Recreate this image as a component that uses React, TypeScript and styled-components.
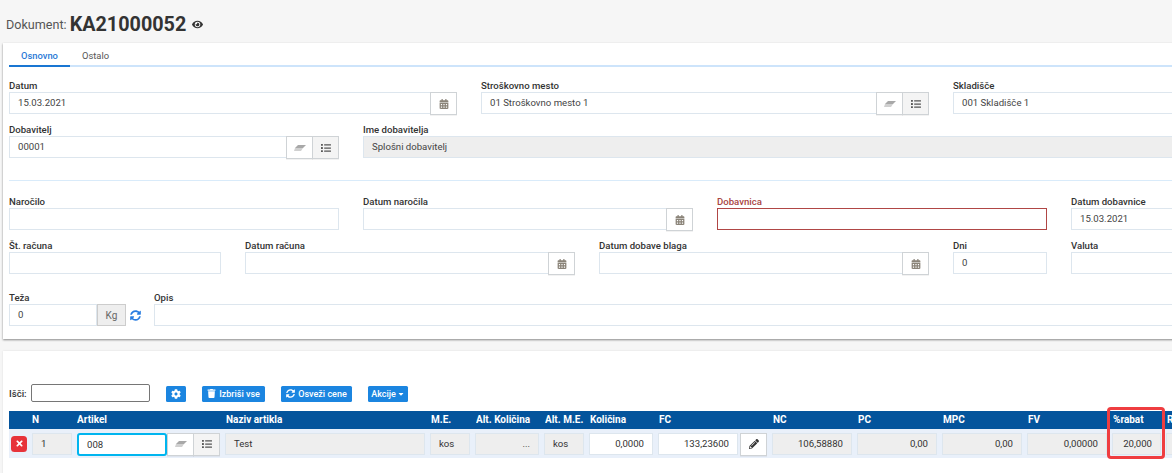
import React from "react";
import styled, { createGlobalStyle } from "styled-components";
import { FaCalendarAlt, FaCog, FaEye, FaList, FaPencilAlt, FaSyncAlt, FaTimes, FaTrash, FaCaretDown } from "react-icons/fa";

const Global = createGlobalStyle`
  html, body { margin: 0; padding: 0; background: #f6f6f6; }
  * { box-sizing: border-box; }
  body { font-family: Roboto, "Liberation Sans", sans-serif; font-size: 10px; color: #333; }
`;
const Page = styled.div`width: 1172px; height: 473px; overflow: hidden; position: relative; padding-top: 9px;`;
const Header = styled.div`height: 30px; margin-bottom: 4px; padding-left: 6px; display: flex; align-items: center; gap: 3px; font-size: 12.6px; color: #555;`;
const DocNo = styled.span`font-size: 19.8px; font-weight: 700; color: #333; margin-right: 3px;`;
const Panel = styled.section`margin-left: 3px; width: 1200px; background: #fff; box-shadow: 0 1px 2px rgba(0,0,0,.45);`;
const TopPanel = styled(Panel)`height: 296px; padding: 0 0 0 6px;`;
const BottomPanel = styled(Panel)`height: 130px; margin-top: 12px; padding: 33px 0 0 6px; box-shadow: 0 0 2px rgba(0,0,0,.1);`;
const Tabs = styled.div`display: flex; height: 24px; width: 1194px; border-bottom: 2px solid #cde4fb; margin-bottom: 13px;`;
const Tab = styled.div<{ $active?: boolean }>`
  height: 24px; padding: 7px 12px 0; font-size: 9.4px; line-height: 12px; font-weight: ${p => p.$active ? 500 : 400};
  color: ${p => p.$active ? "#2a78d6" : "#555"}; border-bottom: 2px solid ${p => p.$active ? "#1976d2" : "transparent"};
`;
const Row = styled.div<{ $h?: number }>`display: flex; gap: 24px; height: ${p => p.$h ?? 44}px;`;
const Field = styled.div<{ $w: number; $ml?: number }>`width: ${p => p.$w}px; flex: none; margin-left: ${p => p.$ml ?? 0}px;`;
const Label = styled.div<{ $error?: boolean }>`
  font-size: 9.6px; line-height: 11px; height: 12px; font-weight: 500; color: ${p => p.$error ? "#a94442" : "#333"}; white-space: nowrap;
`;
const Group = styled.div`display: flex; height: 22px;`;
const Input = styled.div<{ $disabled?: boolean; $error?: boolean; $right?: boolean }>`
  flex: 1; min-width: 0; height: 22px; line-height: 19px; font-size: 9.6px; padding: 0 8px; white-space: nowrap; overflow: hidden;
  border: 1px solid ${p => p.$error ? "#b04645" : "#dde6ee"};
  background: ${p => p.$disabled ? "#eeeeee" : "#fff"}; color: #444;
  text-align: ${p => p.$right ? "right" : "left"};
`;
const Addon = styled.div<{ $shade?: boolean; $ml?: number }>`
  flex: none; width: 27px; height: 23px; display: flex; align-items: center; justify-content: center;
  border: 1px solid #cfd3d6; margin-left: ${p => p.$ml ?? -1}px; background: ${p => p.$shade ? "#f4f4f4" : "#fff"}; color: #555; font-size: 10px;
  box-shadow: 0 1px 0 rgba(0,0,0,.05);
`;
const UnitAddon = styled.div`flex: none; width: 29px; height: 22px; display: flex; align-items: center; justify-content: center; background: #eee; border: 1px solid #ccc; color: #666; font-size: 10px;`;
const Divider = styled.div`width: 1194px; height: 1px; background: #d9ebfa; margin: 0 0 15px;`;
const Spin = styled.div`width: 28px; height: 22px; flex: none; display: flex; align-items: center; padding-left: 4px; color: #2a7de1; font-size: 11px;`;
const Toolbar = styled.div`display: flex; align-items: center; height: 18px; margin-bottom: 9px;`;
const SearchLabel = styled.span`font-size: 9.6px; font-weight: 500; width: 22px;`;
const Search = styled.div`width: 119px; height: 18px; border: 1px solid #767676; border-radius: 2px; background: #fff; margin-right: 16px;`;
const Btn = styled.div<{ $ml?: number; $w: number }>`
  width: ${p => p.$w}px; height: 16px; margin-top: 1px; display: flex; align-items: center; justify-content: center; gap: 3px; border-radius: 1.5px; background: #1b85e0; color: #fff;
  font-size: 9px; font-weight: 500; margin-left: ${p => p.$ml ?? 0}px; white-space: nowrap;
`;
const HeadRow = styled.div`display: flex; width: 1194px; height: 18px; background: #04549c; color: #fff; font-size: 10px; font-weight: 700; line-height: 17px; padding-left: 23px;`;
const Head = styled.div<{ $w: number }>`width: ${p => p.$w}px; flex: none; white-space: nowrap; overflow: hidden;`;
const BodyRow = styled.div`display: flex; align-items: center; gap: 5px; width: 1194px; height: 29px; background: #e9f0fa; padding-left: 2px;`;
const Delete = styled.div`flex: none; width: 16px; height: 16px; border-radius: 3.5px; background: #e7333a; color: #fff; display: flex; align-items: center; justify-content: center; font-size: 9px;`;
const Cell = styled(Input)<{ $w: number }>`flex: none; width: ${p => p.$w}px; border-color: #dde6ee; line-height: 20px; color: #333;`;
const ArticleGroup = styled(Group)`width: 144px;`;
const ArticleInput = styled.div`flex: none; width: 90px; height: 23px; margin-right: 1px; border: 2px solid #00b5ef; border-radius: 3px; background: #fff; padding-left: 8px; line-height: 19px; font-size: 9.6px; color: #333;`;
const Highlight = styled.div`position: absolute; left: 1107px; top: 407px; width: 58px; height: 52px; border: 3px solid #ef3d40; border-radius: 4px; pointer-events: none;`;

const Eraser = () => (
  <svg width="12" height="6" viewBox="0 0 12 6"><path d="M4 0h8L9 3H1z" fill="#a8a8a8" /><path d="M1 3h8L7 6H0z" fill="#d0d0d0" /></svg>
);
const EraseList = () => (
  <>
    <Addon><Eraser /></Addon>
    <Addon $shade><FaList /></Addon>
  </>
);
const Cal = () => <Addon><FaCalendarAlt color="#8a8378" /></Addon>;

const heads: [string, number][] = [
  ["N", 45], ["Artikel", 149], ["Naziv artikla", 205], ["M.E.", 45], ["Alt. Količina", 69], ["Alt. M.E.", 45],
  ["Količina", 69], ["FC", 114], ["NC", 85], ["PC", 85], ["MPC", 85], ["FV", 85], ["%rabat", 54], ["Rabat", 50],
];

export default function App() {
  return (
    <Page>
      <Global />
      <Header>Dokument: <DocNo>KA21000052</DocNo><FaEye size={11} color="#333" /></Header>
      <TopPanel>
        <Tabs><Tab $active>Osnovno</Tab><Tab>Ostalo</Tab></Tabs>
        <Row>
          <Field $w={448}><Label>Datum</Label><Group><Input>15.03.2021</Input><Cal /></Group></Field>
          <Field $w={448}><Label>Stroškovno mesto</Label><Group><Input>01 Stroškovno mesto 1</Input><EraseList /></Group></Field>
          <Field $w={300}><Label>Skladišče</Label><Group><Input>001 Skladišče 1</Input></Group></Field>
        </Row>
        <Row $h={56}>
          <Field $w={330}><Label>Dobavitelj</Label><Group><Input>00001</Input><EraseList /></Group></Field>
          <Field $w={830}><Label>Ime dobavitelja</Label><Group><Input $disabled>Splošni dobavitelj</Input></Group></Field>
        </Row>
        <Divider />
        <Row>
          <Field $w={330}><Label>Naročilo</Label><Group><Input /></Group></Field>
          <Field $w={330}><Label>Datum naročila</Label><Group><Input /><Cal /></Group></Field>
          <Field $w={330}><Label $error>Dobavnica</Label><Group><Input $error /></Group></Field>
          <Field $w={150}><Label>Datum dobavnice</Label><Group><Input>15.03.2021</Input></Group></Field>
        </Row>
        <Row $h={52}>
          <Field $w={212}><Label>Št. računa</Label><Group><Input /></Group></Field>
          <Field $w={330}><Label>Datum računa</Label><Group><Input /><Cal /></Group></Field>
          <Field $w={330}><Label>Datum dobave blaga</Label><Group><Input /><Cal /></Group></Field>
          <Field $w={94}><Label>Dni</Label><Group><Input>0</Input></Group></Field>
          <Field $w={150}><Label>Valuta</Label><Group><Input /></Group></Field>
        </Row>
        <Row $h={35}>
          <Field $w={145}><Label>Teža</Label><Group><Input>0</Input><UnitAddon>Kg</UnitAddon><Spin><FaSyncAlt /></Spin></Group></Field>
          <Field $w={1040} $ml={-24}><Label>Opis</Label><Group><Input /></Group></Field>
        </Row>
      </TopPanel>
      <BottomPanel>
        <Toolbar>
          <SearchLabel>Išči:</SearchLabel>
          <Search />
          <Btn $w={20}><FaCog size={10} /></Btn>
          <Btn $ml={16} $w={63}><FaTrash size={9} /> Izbriši vse</Btn>
          <Btn $ml={16} $w={71}><FaSyncAlt size={9} /> Osveži cene</Btn>
          <Btn $ml={16} $w={40}>Akcije<FaCaretDown size={8} style={{ marginLeft: -2 }} /></Btn>
        </Toolbar>
        <HeadRow>{heads.map(([t, w]) => <Head key={t} $w={w}>{t}</Head>)}</HeadRow>
        <BodyRow>
          <Delete><FaTimes /></Delete>
          <Cell $w={40} $disabled>1</Cell>
          <ArticleGroup>
            <ArticleInput>008</ArticleInput>
            <EraseList />
          </ArticleGroup>
          <Cell $w={200} $disabled>Test</Cell>
          <Cell $w={40} $disabled>kos</Cell>
          <Cell $w={64} $disabled $right>...</Cell>
          <Cell $w={40} $disabled>kos</Cell>
          <Cell $w={64} $right>0,0000</Cell>
          <Group>
            <Cell $w={80} $right>133,23600</Cell>
            <Addon $ml={2}><FaPencilAlt color="#333" /></Addon>
          </Group>
          <Cell $w={80} $disabled $right>106,58880</Cell>
          <Cell $w={80} $disabled $right>0,00</Cell>
          <Cell $w={80} $disabled $right>0,00</Cell>
          <Cell $w={80} $disabled $right>0,00000</Cell>
          <Cell $w={49} $disabled $right>20,000</Cell>
          <Cell $w={60} $disabled />
        </BodyRow>
      </BottomPanel>
      <Highlight />
    </Page>
  );
}
